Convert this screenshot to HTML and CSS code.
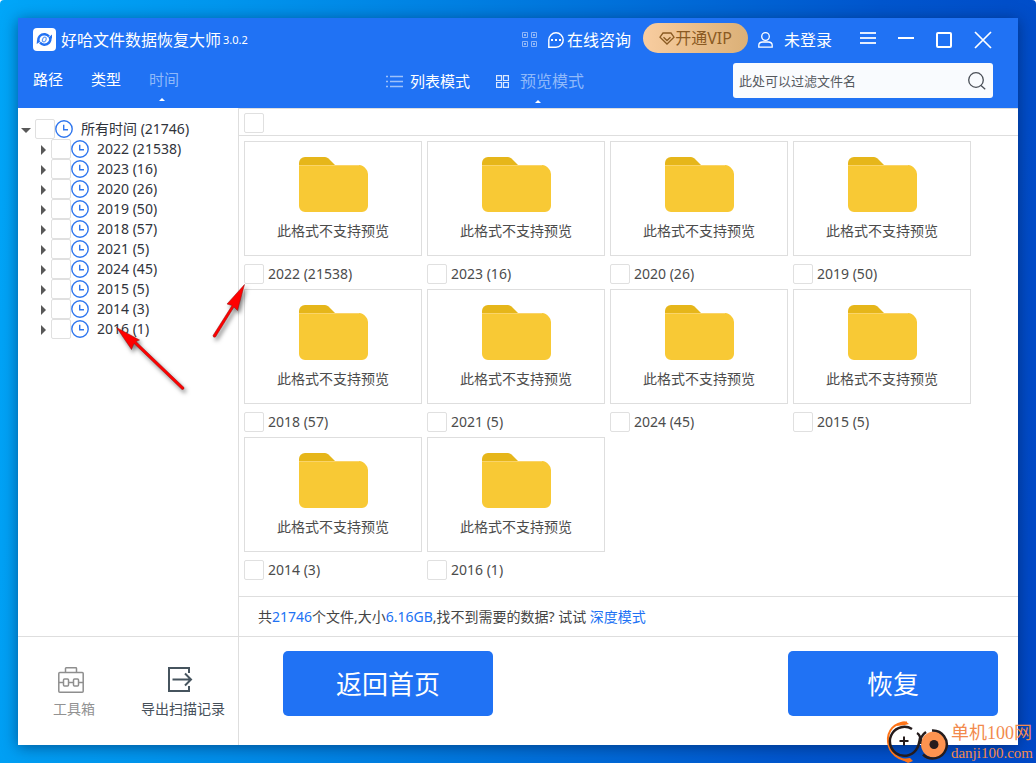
FILE: index.html
```
<!DOCTYPE html>
<html lang="zh-CN">
<head>
<meta charset="utf-8">
<meta name="viewport" content="width=device-width, initial-scale=1">
<title>好哈文件数据恢复大师</title>
<link rel="stylesheet" href="styles.css">
</head>
<body>
<svg class="sprite" aria-hidden="true">
  <symbol id="clock" viewBox="0 0 18 18"><circle cx="9" cy="9" r="8.2" fill="none" stroke="#2f76ee" stroke-width="1.4"/><path d="M8.7 4.8v5h4.3" fill="none" stroke="#2f76ee" stroke-width="1.4"/></symbol>
  <symbol id="folder" viewBox="0 0 69 55"><path d="M0 12V6a6 6 0 0 1 6-6h20q2 0 3.500 1.500L37 9z" fill="#e6b61a"/><path d="M0 8h60q4 0 7 4 2 2 2 5v32a6 6 0 0 1-6 6H6a6 6 0 0 1-6-6z" fill="#f8c935"/><path d="M0 8.500h60" stroke="#fad469"/></symbol>
</svg>
<div class="desktop">
<main class="window">
  <header class="header">
    <div class="titlebar">
      <svg class="logo" viewBox="0 0 23 23" aria-hidden="true"><rect width="23" height="23" rx="4" fill="#fff"/><g fill="none" stroke="#2472f2"><path d="M5.500 13.500C4.500 9 8 5.800 12 6.300c1.800.3 3 1 4 2.200" stroke-width="2.400"/><path d="M17 9c1.500 4.500-2 8-6 7.700-1.800-.2-3-.9-4-2.200" stroke-width="2.400"/><ellipse cx="11.300" cy="11.500" rx="1.700" ry="2.500" stroke-width="1.200" opacity=".7" transform="rotate(25 11.300 11.500)"/></g><path d="M19 6.500v4l-4-.5zM3.700 16l.3-4 3.500 1.500z" fill="#2472f2"/></svg>
      <h1 class="title">好哈文件数据恢复大师</h1>
      <span class="version">3.0.2</span>
      <button class="tool-btn qr" aria-label="二维码"><svg width="15" height="15" viewBox="0 0 15 15" fill="none" stroke="#8fb7f8"><path d="M.5.500h5v5h-5zM9.500.500h5v5h-5zM.5 9.500h5v5h-5zM9.500 9.500h5v5h-5z"/><path d="M2 3h2M11 3h2M2 12h2M11 12h2" stroke-width="2"/></svg></button>
      <button class="tool-btn chat"><svg width="16" height="16" viewBox="0 0 16 16"><path d="M.8 15.200V8A7.200 7.200 0 1 1 8 15.200z" fill="none" stroke="#fff" stroke-width="1.400"/><path d="M3 7h2v2H3zM7 7h2v2H7zM11 7h2v2h-2z" fill="#fff"/></svg>在线咨询</button>
      <button class="vip"><svg width="16" height="13" viewBox="0 0 16 13" fill="none" stroke="#8a5a22" stroke-width="1.300"><path d="M4 1h8l3 4.200L8 12 1 5.200z"/><path d="M4.500 5.200L8 8.500l3.500-3.300"/></svg>开通VIP</button>
      <button class="tool-btn user"><svg width="15" height="16" viewBox="0 0 15 16" fill="none" stroke="#fff" stroke-width="1.300"><circle cx="7.500" cy="4.500" r="3.800"/><path d="M.8 15.200v-2q0-3.200 4-3.200h5.400q4 0 4 3.200v2z"/></svg>未登录</button>
      <div class="controls">
        <button class="tool-btn" aria-label="菜单"><svg width="16" height="18" viewBox="0 0 16 18"><path d="M0 2h16M0 7h16M0 12h16" stroke="#e3edfe" stroke-width="2"/></svg></button>
        <button class="tool-btn" aria-label="最小化"><svg width="16" height="18" viewBox="0 0 16 18"><path d="M0 7h16" stroke="#fff" stroke-width="2"/></svg></button>
        <button class="tool-btn" aria-label="最大化"><svg width="16" height="18" viewBox="0 0 16 18"><rect x="1" y="2" width="14" height="14" rx="1" fill="none" stroke="#fff" stroke-width="2"/></svg></button>
        <button class="tool-btn" aria-label="关闭"><svg width="18" height="18" viewBox="0 0 18 18"><path d="M1 1l16 16M17 1L1 17" stroke="#fff" stroke-width="1.700"/></svg></button>
      </div>
    </div>
    <div class="toolbar">
      <nav class="tabs">
        <button class="tab">路径</button>
        <button class="tab">类型</button>
        <button class="tab active">时间</button>
      </nav>
      <div class="modes">
        <button class="mode"><svg width="17" height="13" viewBox="0 0 17 13"><path d="M0 1.500h2M4 1.500h13M0 6.500h2M4 6.500h13M0 11.500h2M4 11.500h13" stroke="#9dc1fa" stroke-width="1.600"/></svg>列表模式</button>
        <button class="mode large active"><svg width="13" height="13" viewBox="0 0 13 13"><path d="M.6.600h4.900v4.900H.6zM7.500.600h4.900v4.900H7.500zM.6 7.500h4.900v4.900H.6zM7.500 7.500h4.900v4.900H7.500z" fill="none" stroke="#dce9fe" stroke-width="1.200"/></svg>预览模式</button>
      </div>
      <label class="search"><input type="text" placeholder="此处可以过滤文件名" aria-label="过滤文件名"><svg width="18" height="18" viewBox="0 0 18 18" fill="none" stroke="#4a4f57" stroke-width="1.300"><circle cx="8" cy="8" r="7.300"/><path d="M13 13.500l4.200 3.700"/></svg></label>
    </div>
  </header>

  <div class="content">
    <aside class="sidebar">
      <ul class="tree">
        <li>
          <label class="node"><span class="caret open"></span><input class="check" type="checkbox"><svg class="clock"><use href="#clock"/></svg><span>所有时间 (21746)</span></label>
          <ul class="branch">
            <li><label class="node"><span class="caret"></span><input class="check" type="checkbox"><svg class="clock"><use href="#clock"/></svg><span>2022 (21538)</span></label></li>
            <li><label class="node"><span class="caret"></span><input class="check" type="checkbox"><svg class="clock"><use href="#clock"/></svg><span>2023 (16)</span></label></li>
            <li><label class="node"><span class="caret"></span><input class="check" type="checkbox"><svg class="clock"><use href="#clock"/></svg><span>2020 (26)</span></label></li>
            <li><label class="node"><span class="caret"></span><input class="check" type="checkbox"><svg class="clock"><use href="#clock"/></svg><span>2019 (50)</span></label></li>
            <li><label class="node"><span class="caret"></span><input class="check" type="checkbox"><svg class="clock"><use href="#clock"/></svg><span>2018 (57)</span></label></li>
            <li><label class="node"><span class="caret"></span><input class="check" type="checkbox"><svg class="clock"><use href="#clock"/></svg><span>2021 (5)</span></label></li>
            <li><label class="node"><span class="caret"></span><input class="check" type="checkbox"><svg class="clock"><use href="#clock"/></svg><span>2024 (45)</span></label></li>
            <li><label class="node"><span class="caret"></span><input class="check" type="checkbox"><svg class="clock"><use href="#clock"/></svg><span>2015 (5)</span></label></li>
            <li><label class="node"><span class="caret"></span><input class="check" type="checkbox"><svg class="clock"><use href="#clock"/></svg><span>2014 (3)</span></label></li>
            <li><label class="node"><span class="caret"></span><input class="check" type="checkbox"><svg class="clock"><use href="#clock"/></svg><span>2016 (1)</span></label></li>
          </ul>
        </li>
      </ul>
    </aside>

    <section class="files">
      <div class="select-all"><input class="check" type="checkbox" aria-label="全选"></div>
      <div class="grid">
        <article class="file"><div class="preview"><svg class="folder"><use href="#folder"/></svg>此格式不支持预览</div><label class="caption"><input class="check" type="checkbox">2022 (21538)</label></article>
        <article class="file"><div class="preview"><svg class="folder"><use href="#folder"/></svg>此格式不支持预览</div><label class="caption"><input class="check" type="checkbox">2023 (16)</label></article>
        <article class="file"><div class="preview"><svg class="folder"><use href="#folder"/></svg>此格式不支持预览</div><label class="caption"><input class="check" type="checkbox">2020 (26)</label></article>
        <article class="file"><div class="preview"><svg class="folder"><use href="#folder"/></svg>此格式不支持预览</div><label class="caption"><input class="check" type="checkbox">2019 (50)</label></article>
        <article class="file"><div class="preview"><svg class="folder"><use href="#folder"/></svg>此格式不支持预览</div><label class="caption"><input class="check" type="checkbox">2018 (57)</label></article>
        <article class="file"><div class="preview"><svg class="folder"><use href="#folder"/></svg>此格式不支持预览</div><label class="caption"><input class="check" type="checkbox">2021 (5)</label></article>
        <article class="file"><div class="preview"><svg class="folder"><use href="#folder"/></svg>此格式不支持预览</div><label class="caption"><input class="check" type="checkbox">2024 (45)</label></article>
        <article class="file"><div class="preview"><svg class="folder"><use href="#folder"/></svg>此格式不支持预览</div><label class="caption"><input class="check" type="checkbox">2015 (5)</label></article>
        <article class="file"><div class="preview"><svg class="folder"><use href="#folder"/></svg>此格式不支持预览</div><label class="caption"><input class="check" type="checkbox">2014 (3)</label></article>
        <article class="file"><div class="preview"><svg class="folder"><use href="#folder"/></svg>此格式不支持预览</div><label class="caption"><input class="check" type="checkbox">2016 (1)</label></article>
      </div>
      <p class="status">共<b>21746</b>个文件,大小<b>6.16GB</b>,找不到需要的数据? 试试 <a class="deep" href="#">深度模式</a></p>
    </section>
  </div>

  <footer class="footer">
    <div class="tools">
      <button class="tool muted"><svg width="26" height="26" viewBox="0 0 26 26" fill="none" stroke="#8e8e8e" stroke-width="1.500"><rect x=".8" y="5.500" width="24.400" height="19.700" rx="1"/><path d="M7.500 5V1.500q0-.7.7-.7h9.600q.7 0 .7.700V5M1 15.500h4.500M10.500 15.500h5M20.500 15.500H25"/><rect x="5.500" y="12" width="5" height="7" rx="1"/><rect x="15.500" y="12" width="5" height="7" rx="1"/></svg>工具箱</button>
      <button class="tool"><svg width="26" height="26" viewBox="0 0 26 26" fill="none" stroke="#46545e" stroke-width="2"><path d="M22 6V1H2v23h20v-5M5.500 12.500H24M18 6.500l6 6-6 6"/></svg>导出扫描记录</button>
    </div>
    <div class="actions">
      <button class="primary">返回首页</button>
      <button class="primary">恢复</button>
    </div>
  </footer>
  <svg class="arrows" width="130" height="110" viewBox="0 0 130 110" aria-hidden="true"><g fill="#fe0000" stroke="#8c1010" stroke-width=".5"><path d="M127.500.500L110 20l5 1.500L96 51.500q0 2.500 2.500 1.500L117 23l3.500 3.500z"/><path d="M-.5 43.500l15 22 2.500-6 48 46q2.500 0 2-2L19 57.500l3.500-1.500z"/></g></svg>
</main>
<div class="watermark">
  <svg width="64" height="43" viewBox="0 0 64 43" fill="none" aria-hidden="true"><path d="M22 2.500C9 2 2 11 3 22c1 12 11 18 23 19" stroke="#fe7418" stroke-width="2"/><path d="M11 6Q19-2 24 4l-4 1zM16 39l9-1 3 3-5 2z" fill="#fe7418"/><path d="M27 9A14.500 14.500 0 1 0 31 30Q34 26 35 18M32 13q4 2 4 11" stroke="#251c1d" stroke-width="2.500"/><path d="M19 16.500v9M14.500 21h9" stroke="#251c1d" stroke-width="2"/><circle cx="49" cy="24.500" r="13" fill="#fd9350"/><path d="M47 10.500a14 14 0 1 1-9 24M41 12q-6 4-6 12" stroke="#251c1d" stroke-width="2.500"/><circle cx="49" cy="24.500" r="4.500" fill="#251c1d"/></svg>
  <div class="mark-text"><span class="mark-name">单机100网</span><span class="mark-site">danji100.com</span></div>
</div>
</div>
</body>
</html>
```
FILE: styles.css
```
* { box-sizing: border-box; }

body {
  margin: 0;
  background: #fff;
  color: #444;
  font: 14px/20px "Noto Sans", "Noto Sans CJK SC", sans-serif;
}

button {
  padding: 0;
  border: 0;
  background: none;
  color: inherit;
  font: inherit;
  white-space: nowrap;
}

svg { display: block; flex: none; }
.sprite { position: absolute; width: 0; height: 0; }

.desktop {
  position: relative;
  display: flex;
  min-height: 100vh;
  padding: 18px;
  border-radius: 4px 4px 0 0;
  background: linear-gradient(97deg, #00a6f8 0%, #0096ee 20%, #0074dc 52%, #0056ce 78%, #0048c6 100%);
}

.window {
  position: relative;
  display: flex;
  flex: 1;
  flex-direction: column;
  min-width: 0;
  background: #fff;
  box-shadow: 0 2px 14px rgba(0, 20, 60, .5);
}

.header { background: #2072f4; color: #fff; }

.titlebar {
  display: flex;
  align-items: center;
  height: 43px;
  padding: 0 26px 0 15px;
  font-size: 16px;
}
.logo { width: 23px; height: 23px; }
.title { margin: 0 2px 0 5px; font-size: 16px; font-weight: 400; white-space: nowrap; }
.version { margin-right: auto; font-size: 11px; }
.tool-btn { display: flex; align-items: center; }
.qr { margin-right: 11px; }
.chat { gap: 3px; margin-right: 12px; }
.vip {
  display: flex;
  align-items: center;
  justify-content: center;
  width: 105px;
  height: 30px;
  margin: 0 10px 3px 0;
  border-radius: 15px;
  background: linear-gradient(90deg, #f8cda0, #dbb077);
  color: #8a5a22;
}
.user { gap: 11px; }
.controls { display: flex; gap: 22px; margin-left: 28px; }

.toolbar {
  display: grid;
  grid-template-columns: 353px 1fr 260px;
  height: 47px;
  padding: 0 25px 0 15px;
}
.tabs, .modes { display: flex; align-items: flex-start; }
.tabs { gap: 28px; padding-top: 8px; font-size: 15px; }
.modes { gap: 26px; padding-top: 10px; font-size: 15px; }
.mode { display: flex; align-items: center; gap: 7px; }
.mode.large { gap: 11px; font-size: 16px; }
.tab.active, .mode.active { position: relative; color: #8fb9fa; }
.tab.active::after, .mode.active::after {
  content: "";
  position: absolute;
  top: 29px;
  left: 50%;
  margin-left: -5px;
  border: 3px solid transparent;
  border-top: 0;
  border-bottom-color: #fff;
}
.search {
  display: flex;
  align-items: center;
  height: 35px;
  margin-top: 2px;
  padding: 0 7px 0 6px;
  border-radius: 3px;
  background: #f9fbfe;
}
.search input {
  flex: 1;
  min-width: 0;
  padding: 0;
  border: 0;
  outline: 0;
  background: none;
  font: inherit;
  font-size: 13px;
}
.search input::placeholder { color: #55595e; opacity: 1; }

.content { display: flex; flex: 1; }
.sidebar { flex: 0 0 221px; border-right: 1px solid #dedede; }
.tree, .branch { margin: 0; padding: 0; list-style: none; }
.tree { padding: 11px 0 0 3px; color: #2f333b; }
.branch { padding-left: 16px; }
.node { display: flex; align-items: center; height: 20px; }
.node span:last-child { margin-left: 8px; white-space: nowrap; }
.caret { display: flex; align-items: center; width: 14px; height: 20px; padding-top: 2px; }
.branch .caret { padding-left: 4px; }
.caret::before {
  content: "";
  border: 5px solid transparent;
  border-left-color: #585858;
  border-right: 0;
}
.caret.open::before { border: 5px solid transparent; border-top-color: #585858; border-bottom: 0; }
.clock { width: 18px; height: 18px; }
.check {
  flex: none;
  appearance: none;
  width: 20px;
  height: 20px;
  margin: 0;
  border: 1px solid #e0e0e0;
  border-radius: 2px;
  background: #fff;
}

.files { display: flex; flex: 1; flex-direction: column; min-width: 0; border-top: 1px solid #dedede; }
.select-all { height: 27px; padding: 4px 5px; border-bottom: 1px solid #dedede; }
.select-all .check { display: block; }
.grid {
  display: grid;
  flex: 1;
  grid-template-columns: repeat(auto-fill, 178px);
  align-content: start;
  gap: 5px;
  padding: 5px;
  color: #4c4c4c;
}
.preview {
  display: flex;
  flex-direction: column;
  align-items: center;
  gap: 9px;
  height: 115px;
  padding-top: 15px;
  border: 1px solid #dedede;
}
.folder { width: 69px; height: 55px; }
.caption { display: flex; align-items: center; gap: 4px; margin-top: 8px; }
.status { margin: 0; padding: 10px 19px 9px; border-top: 1px solid #dedede; }
.status b { color: #2072f4; font-weight: 400; }
.deep { color: #2072f4; text-decoration: none; }

.footer { display: flex; border-top: 1px solid #dedede; }
.tools {
  display: flex;
  flex: 0 0 221px;
  justify-content: space-between;
  align-items: flex-start;
  padding: 30px 13px 25px 35px;
  border-right: 1px solid #dedede;
}
.tool { display: flex; flex-direction: column; align-items: center; gap: 6px; color: #46505a; }
.tool svg { margin-right: 6px; }
.muted { color: #929292; }
.actions {
  display: flex;
  flex: 1;
  justify-content: space-between;
  align-items: flex-start;
  padding: 14px 20px 29px 44px;
}
.primary {
  width: 210px;
  height: 65px;
  border-radius: 5px;
  background: #2072f4;
  color: #fff;
  font-size: 26px;
}

.arrows {
  position: absolute;
  top: 266px;
  left: 99px;
  overflow: visible;
  pointer-events: none;
  filter: drop-shadow(2px 3px 2px rgba(0, 0, 0, .5));
}

.watermark {
  position: absolute;
  right: 3px;
  bottom: 0;
  display: flex;
  align-items: center;
  gap: 2px;
  color: #f28a4d;
  font-family: "Liberation Serif", "Noto Sans CJK SC", serif;
}
.mark-text { display: flex; flex-direction: column; }
.mark-name { font-size: 18px; line-height: 22px; }
.mark-site { font-size: 15px; line-height: 18px; }
```
